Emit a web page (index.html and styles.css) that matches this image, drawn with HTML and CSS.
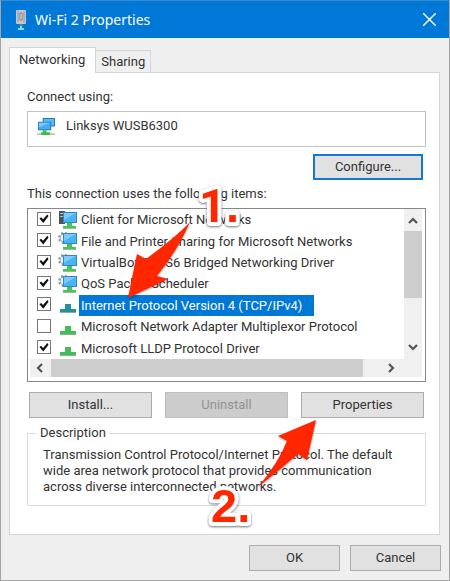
FILE: index.html
```html
<!DOCTYPE html>
<html lang="en">
<head>
<meta charset="utf-8">
<title>Wi-Fi 2 Properties</title>
<link rel="stylesheet" href="styles.css">
</head>
<body>
<svg class="defs" aria-hidden="true">
  <symbol id="screen" viewBox="0 0 20 20">
    <path d="M9 13h5v3h4v3H5v-3h4z" fill="#45c653"/>
    <path d="M5 18h13v1H5z" fill="#9fb5a3"/>
    <path d="M5 2h14v11H5z" fill="#2f88c0"/>
    <path d="M6 3h12v9H6z" fill="#49b4f5"/>
    <path d="M6 3h12L6 10z" fill="#7accfb"/>
  </symbol>
  <symbol id="client" viewBox="0 0 20 20">
    <path d="M1 1h6v13H1z" fill="#4b5258"/>
    <path d="M2 3h3v1H2zM2 6h3v1H2z" fill="#b4bec5"/>
    <use href="#screen"/>
  </symbol>
  <symbol id="service" viewBox="0 0 20 20">
    <circle cx="6" cy="7" r="4" fill="#eef2f4" stroke="#a3b2bd" stroke-width="1"/>
    <circle cx="6" cy="7" r="5" fill="none" stroke="#8a9aa5" stroke-width="2" stroke-dasharray="2 2"/>
    <use href="#screen"/>
  </symbol>
  <symbol id="protocol" viewBox="0 0 20 20">
    <path d="M7 9h6v5h5v4H2v-4h5z" fill="currentColor"/>
    <path d="M2 17h16v1H2z" fill="#88ad93"/>
  </symbol>
</svg>
<main class="dialog">
  <header class="titlebar">
    <svg class="titlebar-icon" viewBox="0 0 12 22" aria-hidden="true">
      <rect x="1" y="1" width="10" height="14" rx="1" fill="#c3c7cd"/>
      <path d="M3 2v11M9 2v11" stroke="#8f98a3"/>
      <path d="M5 4h2v7H5z" fill="#f1f3f5" stroke="#727b87"/>
      <path d="M4 15h4v2H4z" fill="#65788b"/>
      <path d="M5 17h2v2h2v2H3v-2h2z" fill="#75e2f2"/>
    </svg>
    <h1 class="title">Wi-Fi 2 Properties</h1>
    <button class="close" aria-label="Close"><svg viewBox="0 0 12 12" aria-hidden="true"><path d="M0 0l12 12M12 0L0 12" stroke="#fff" stroke-width="1.3"/></svg></button>
  </header>
  <div class="content">
    <div class="tabs" role="tablist">
      <button class="tab tab-active" role="tab" aria-selected="true">Networking</button>
      <button class="tab" role="tab" aria-selected="false">Sharing</button>
    </div>
    <section class="panel">
      <p class="label">Connect using:</p>
      <div class="adapter">
        <svg class="adapter-icon" viewBox="0 0 20 20" aria-hidden="true">
          <path d="M6 1h13v9H6z" fill="#2678b6"/><path d="M7 2h11v7H7z" fill="#59b9f4"/>
          <path d="M1 5h14v9H1z" fill="#2678b6"/><path d="M2 6h12v7H2z" fill="#45aef2"/><path d="M2 6h12L2 11z" fill="#79c9fa"/>
          <path d="M6 14h4v2h4v3H4v-3h2z" fill="#43bd4d"/><path d="M0 17h4v2H0zM14 17h5v2h-5z" fill="#b9cabc"/>
        </svg>
        <span>Linksys WUSB6300</span>
      </div>
      <div class="configure-row"><button class="button button-default">Configure...</button></div>
      <p class="label">This connection uses the following items:</p>
      <div class="list">
        <div class="items">
          <label class="item"><input type="checkbox" checked><svg><use href="#client"/></svg><span>Client for Microsoft Networks</span></label>
          <label class="item"><input type="checkbox" checked><svg><use href="#service"/></svg><span>File and Printer Sharing for Microsoft Networks</span></label>
          <label class="item"><input type="checkbox" checked><svg><use href="#service"/></svg><span>VirtualBox NDIS6 Bridged Networking Driver</span></label>
          <label class="item"><input type="checkbox" checked><svg><use href="#service"/></svg><span>QoS Packet Scheduler</span></label>
          <label class="item item-selected"><input type="checkbox" checked><svg><use href="#protocol"/></svg><span>Internet Protocol Version 4 (TCP/IPv4)</span></label>
          <label class="item"><input type="checkbox"><svg><use href="#protocol"/></svg><span>Microsoft Network Adapter Multiplexor Protocol</span></label>
          <label class="item"><input type="checkbox" checked><svg><use href="#protocol"/></svg><span>Microsoft LLDP Protocol Driver</span></label>
        </div>
        <div class="scroll scroll-v">
          <svg viewBox="0 0 10 10"><path d="M1 7l4-4 4 4"/></svg>
          <div class="thumb"></div>
          <svg viewBox="0 0 10 10"><path d="M1 3l4 4 4-4"/></svg>
        </div>
        <div class="scroll scroll-h">
          <svg viewBox="0 0 10 10"><path d="M7 1L3 5l4 4"/></svg>
          <div class="thumb"></div>
          <svg viewBox="0 0 10 10"><path d="M3 1l4 4-4 4"/></svg>
        </div>
      </div>
      <div class="actions">
        <button class="button">Install...</button>
        <button class="button" disabled>Uninstall</button>
        <button class="button">Properties</button>
      </div>
      <fieldset class="description">
        <legend>Description</legend>
        <p>Transmission Control Protocol/Internet Protocol. The default wide area network protocol that provides communication across diverse interconnected networks.</p>
      </fieldset>
    </section>
    <footer class="footer">
      <button class="button">OK</button>
      <button class="button">Cancel</button>
    </footer>
  </div>
  <svg class="annotations" viewBox="0 0 450 581">
    <g class="arrow">
      <path d="M128 298L137 254L146 259Q176 237 190 222Q178 250 157 276L168 279Z"/>
      <path d="M316 420L278 436L287 441Q279 462 258 487Q282 468 298 454L307 460Z"/>
    </g>
    <text class="step" x="199" y="222"><tspan class="step-one">1</tspan>.</text>
    <text class="step" x="211" y="522">2.</text>
  </svg>
</main>
</body>
</html>
```
FILE: styles.css
```css
* { box-sizing: border-box; }

body {
  margin: 0;
  font: 13px/16px Roboto, "Liberation Sans", sans-serif;
  color: #333;
}

p, h1 { margin: 0; }

button { font: inherit; color: inherit; }

.defs { display: none; }

.dialog {
  position: relative;
  display: flex;
  flex-direction: column;
  min-height: 100vh;
  border: 1px solid #a5a5a5;
  border-top-color: #3f8ac6;
  background: #efefef;
}

.titlebar {
  display: flex;
  align-items: center;
  gap: 8px;
  height: 37px;
  padding: 0 13px 0 14px;
  background: #0078d7;
  color: #fff;
}

.titlebar-icon { width: 12px; height: 22px; }

.title {
  flex: 1;
  font: 14px/20px "Noto Sans", "Open Sans", sans-serif;
}

.close {
  display: flex;
  padding: 0;
  border: 0;
  background: none;
}

.close svg { width: 13px; height: 13px; }

.content {
  flex: 1;
  display: flex;
  flex-direction: column;
  padding: 9px 8px;
}

.tabs {
  display: flex;
  align-items: flex-end;
}

.tab {
  height: 22px;
  padding: 0 5px;
  border: 1px solid #d5d5d5;
  border-bottom: 0;
  border-left: 0;
  background: #efefef;
}

.tab-active {
  z-index: 1;
  height: 26px;
  margin-bottom: -1px;
  padding: 0 10px 2px 9px;
  border-left: 1px solid #d5d5d5;
  background: #fff;
}

.panel {
  flex: 1;
  display: flex;
  flex-direction: column;
  margin-right: 1px;
  padding: 16px 13px 26px 17px;
  border: 1px solid #d5d5d5;
  background: #fff;
}

.label { padding-bottom: 6px; }

.adapter {
  display: flex;
  align-items: flex-start;
  gap: 10px;
  height: 36px;
  padding: 5px 9px;
  border: 1px solid #bfc3c4;
}

.adapter span { padding-top: 1px; }

.adapter-icon { width: 19px; height: 19px; }

.button {
  height: 26px;
  padding: 0;
  border: 1px solid #acacac;
  background: #e1e1e1;
}

.button:disabled {
  border-color: #bfbfbf;
  background: #ccc;
  color: #929292;
}

.button-default {
  width: 110px;
  border: 2px solid #1577d2;
}

.configure-row {
  display: flex;
  justify-content: flex-end;
  padding: 7px 3px 6px 0;
}

.list {
  display: grid;
  grid-template: 150px 18px / 1fr 18px;
  padding: 0 3px 4px 2px;
  border: 1px solid #828790;
}

.items {
  display: grid;
  grid-template-rows: repeat(7, 1fr);
  padding-left: 7px;
}

.item {
  display: flex;
  align-items: center;
}

.item input {
  appearance: none;
  width: 14px;
  height: 14px;
  margin: 0 7px 2px 0;
  border: 1px solid #777;
  background: #fff;
}

.item input:checked::after {
  content: "";
  display: block;
  height: 12px;
  background: #111;
  clip-path: polygon(12% 48%, 26% 38%, 42% 55%, 78% 14%, 88% 28%, 44% 86%);
}

.item svg {
  width: 20px;
  height: 20px;
  margin-right: 1px;
  color: #43bd55;
}

.item span {
  padding: 3px 7px 2px 2px;
}

.item-selected svg { color: #278f97; }

.item-selected span {
  padding-right: 12px;
  background: #0078d7;
  color: #fff;
}

.scroll {
  display: flex;
  align-items: center;
  background: #f0f0f0;
}

.scroll svg {
  width: 10px;
  height: 10px;
  fill: none;
  stroke: #555;
  stroke-width: 2.2;
}

.scroll-v {
  flex-direction: column;
  justify-content: space-between;
  padding: 7px 0;
}

.scroll-v .thumb {
  flex: 0 0 67px;
  align-self: stretch;
  margin: 5px 0 44px;
  background: #cdcdcd;
}

.scroll-h {
  grid-column: 1 / -1;
  padding: 0 26px 0 5px;
}

.scroll-h .thumb {
  flex: 1;
  align-self: stretch;
  margin: 0 23px 0 6px;
  background: #cdcdcd;
}

.actions {
  display: grid;
  grid-template-columns: repeat(3, 1fr);
  gap: 13px;
  padding: 10px 2px 7px 2px;
}

.description {
  min-width: 0;
  margin: 0;
  padding: 6px 30px 10px 15px;
  border: 1px solid #dcdcdc;
}

.description legend {
  margin-left: -7px;
  padding: 0 4px;
}

.footer {
  display: flex;
  justify-content: flex-end;
  gap: 10px;
  padding-top: 10px;
}

.footer .button { width: 91px; }

.annotations {
  position: absolute;
  top: -1px;
  left: -1px;
  width: 450px;
  height: 581px;
  pointer-events: none;
}

.arrow {
  fill: #ff2600;
  filter: drop-shadow(0 1px 1px rgb(0 0 0 / 35%));
}

.step {
  font: bold 47px "Liberation Sans", sans-serif;
  fill: #ff2600;
  stroke: #fff;
  stroke-width: 8px;
  stroke-linejoin: round;
  paint-order: stroke;
  filter: drop-shadow(0 1px 1px rgb(0 0 0 / 55%));
}

.step-one { font-family: Roboto, sans-serif; }
```
